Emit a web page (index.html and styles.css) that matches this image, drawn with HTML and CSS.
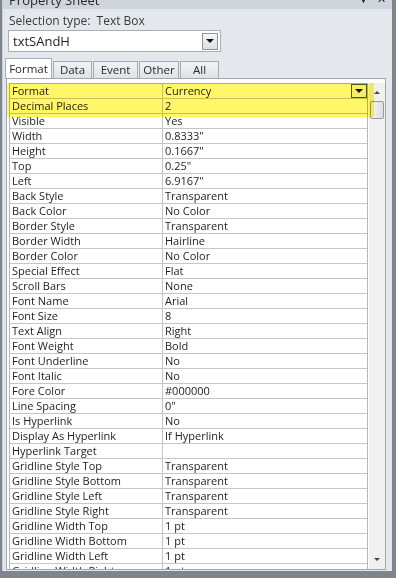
FILE: index.html
```html
<!DOCTYPE html>
<html lang="en">
<head>
  <meta charset="UTF-8" />
  <title>Property Sheet</title>
  <link rel="stylesheet" href="styles.css">
</head>
<body>
  <div class="sheet">
    <div class="title">
      <span class="title-text">Property Sheet</span>
      <span class="title-ctrls"><span class="pin">&#9660;</span><span class="close">&#10005;</span></span>
    </div>

    <div class="seltype">Selection type:&nbsp; Text Box</div>

    <div class="combo">
      <span class="combo-text">txtSAndH</span>
      <span class="combo-btn"><span class="arrow"></span></span>
    </div>

    <div class="tabs">
      <div class="tab active tab-format">Format</div>
      <div class="tab tab-data">Data</div>
      <div class="tab tab-event">Event</div>
      <div class="tab tab-other">Other</div>
      <div class="tab tab-all">All</div>
    </div>

    <div class="gridwrap">
      <div class="grid">
        <div class="row"><div class="k">Format</div><div class="v">Currency<span class="cell-btn"><span class="arrow"></span></span></div></div>
        <div class="row"><div class="k">Decimal Places</div><div class="v">2</div></div>
        <div class="row"><div class="k">Visible</div><div class="v">Yes</div></div>
        <div class="row"><div class="k">Width</div><div class="v">0.8333"</div></div>
        <div class="row"><div class="k">Height</div><div class="v">0.1667"</div></div>
        <div class="row"><div class="k">Top</div><div class="v">0.25"</div></div>
        <div class="row"><div class="k">Left</div><div class="v">6.9167"</div></div>
        <div class="row"><div class="k">Back Style</div><div class="v">Transparent</div></div>
        <div class="row"><div class="k">Back Color</div><div class="v">No Color</div></div>
        <div class="row"><div class="k">Border Style</div><div class="v">Transparent</div></div>
        <div class="row"><div class="k">Border Width</div><div class="v">Hairline</div></div>
        <div class="row"><div class="k">Border Color</div><div class="v">No Color</div></div>
        <div class="row"><div class="k">Special Effect</div><div class="v">Flat</div></div>
        <div class="row"><div class="k">Scroll Bars</div><div class="v">None</div></div>
        <div class="row"><div class="k">Font Name</div><div class="v">Arial</div></div>
        <div class="row"><div class="k">Font Size</div><div class="v">8</div></div>
        <div class="row"><div class="k">Text Align</div><div class="v">Right</div></div>
        <div class="row"><div class="k">Font Weight</div><div class="v">Bold</div></div>
        <div class="row"><div class="k">Font Underline</div><div class="v">No</div></div>
        <div class="row"><div class="k">Font Italic</div><div class="v">No</div></div>
        <div class="row"><div class="k">Fore Color</div><div class="v">#000000</div></div>
        <div class="row"><div class="k">Line Spacing</div><div class="v">0"</div></div>
        <div class="row"><div class="k">Is Hyperlink</div><div class="v">No</div></div>
        <div class="row"><div class="k">Display As Hyperlink</div><div class="v">If Hyperlink</div></div>
        <div class="row"><div class="k">Hyperlink Target</div><div class="v"></div></div>
        <div class="row"><div class="k">Gridline Style Top</div><div class="v">Transparent</div></div>
        <div class="row"><div class="k">Gridline Style Bottom</div><div class="v">Transparent</div></div>
        <div class="row"><div class="k">Gridline Style Left</div><div class="v">Transparent</div></div>
        <div class="row"><div class="k">Gridline Style Right</div><div class="v">Transparent</div></div>
        <div class="row"><div class="k">Gridline Width Top</div><div class="v">1 pt</div></div>
        <div class="row"><div class="k">Gridline Width Bottom</div><div class="v">1 pt</div></div>
        <div class="row"><div class="k">Gridline Width Left</div><div class="v">1 pt</div></div>
        <div class="row"><div class="k">Gridline Width Right</div><div class="v">1 pt</div></div>
      </div>
      <div class="scroll">
        <span class="sc-up"></span>
        <span class="thumb"></span>
        <span class="sc-down"></span>
      </div>
      <!-- yellow marker over the first two rows -->
      <div class="highlight"></div>
    </div>
  </div>
</body>
</html>
```

FILE: styles.css
```css
body {
  margin: 0;
  width: 396px;
  height: 578px;
  overflow: hidden;
  background: #7f858c;
  font-family: "Open Sans", "Noto Sans", sans-serif;
  color: #1e1e1e;
}
.sheet {
  height: 571px;
  margin-left: 2px;
  margin-right: 4px;
  background: #e4e8ed;
  border-left: 1px solid #c9ced4;
  display: flex;
  flex-direction: column;
}
.title {
  height: 9px;
  overflow: hidden;
  background: #cfd5dc;
  display: flex;
  justify-content: space-between;
  padding: 0 6px;
  font-size: 13px;
  color: #2a2a2a;
}
.title-text {
  display: block;
  margin-top: -8px;
  line-height: 16px;
}
.title-ctrls {
  margin-top: -8px;
  line-height: 14px;
  font-size: 11px;
  display: flex;
  gap: 8px;
}
.seltype {
  font-size: 12px;
  color: #3a3a3a;
  padding: 3px 0 0 6px;
  height: 18px;
  line-height: 17px;
}
.combo {
  margin-left: 5px;
  width: 211px;
  height: 20px;
  border: 1px solid #a9aeb4;
  background: #fff;
  display: flex;
  align-items: center;
  justify-content: space-between;
  font-size: 13px;
}
.combo-text {
  padding-left: 4px;
}
.combo-btn {
  width: 14px;
  height: 15px;
  margin-right: 2px;
  border: 1px solid #8f949a;
  background: linear-gradient(#f4f5f6, #dcdfe2);
  display: flex;
  align-items: center;
  justify-content: center;
}
.arrow {
  width: 0;
  height: 0;
  border-left: 4px solid transparent;
  border-right: 4px solid transparent;
  border-top: 4px solid #111;
}
.tabs {
  display: flex;
  align-items: flex-end;
  margin-top: 5px;
  padding-left: 2px;
  height: 21px;
  font-size: 11.5px;
}
.tab {
  box-sizing: border-box;
  text-align: center;
  height: 17px;
  line-height: 16px;
  margin-right: 1px;
  border: 1px solid #a7acb2;
  border-bottom: none;
  background: linear-gradient(#f1f2f4, #dfe2e6);
  color: #2a2a2a;
}
.tab-format { width: 47px; }
.tab-data { width: 39px; }
.tab-event { width: 45px; }
.tab-other { width: 40px; }
.tab-all { width: 39px; }
.tab.active {
  height: 21px;
  line-height: 19px;
  background: #fff;
  position: relative;
  top: 1px;
  margin-right: 1px;
}
.gridwrap {
  position: relative;
  margin: 0 0 0 3px;
  width: 380px;
  height: 492px;
  border: 1px solid #a2a7ad;
  background: #fff;
  display: flex;
  padding: 4px 0 0 2px;
  box-sizing: border-box;
  overflow: hidden;
}
.grid {
  width: 361px;
  border: 1px solid #b7b7b7;
  border-bottom: none;
  font-size: 11px;
}
.row {
  display: flex;
  height: 15px;
  border-bottom: 1px solid #c6c6c6;
  box-sizing: border-box;
  line-height: 14px;
}
.k {
  width: 150px;
  padding-left: 2px;
  border-right: 1px solid #c6c6c6;
}
.v {
  flex: 1;
  padding-left: 2px;
  display: flex;
  justify-content: space-between;
}
.cell-btn {
  width: 14px;
  height: 12px;
  border: 1px solid #555;
  background: #f6f6f2;
  display: flex;
  align-items: center;
  justify-content: center;
}
.scroll {
  width: 16px;
  margin-left: 1px;
  background: #f0f0f0;
  position: relative;
}
.sc-up, .sc-down {
  position: absolute;
  left: 5px;
  width: 0;
  height: 0;
  border-left: 3px solid transparent;
  border-right: 3px solid transparent;
}
.sc-up {
  top: 8px;
  border-bottom: 3px solid #444;
}
.sc-down {
  bottom: 8px;
  border-top: 3px solid #444;
}
.thumb {
  position: absolute;
  left: 1px;
  top: 18px;
  width: 12px;
  height: 16px;
  border: 1px solid #9a9a9a;
  border-radius: 2px;
  background: linear-gradient(90deg, #f4f4f4, #dedede);
}
.highlight {
  position: absolute;
  left: 0;
  top: 4px;
  width: 367px;
  height: 34px;
  background: #fff64d;
  mix-blend-mode: multiply;
  opacity: 0.85;
}
```
